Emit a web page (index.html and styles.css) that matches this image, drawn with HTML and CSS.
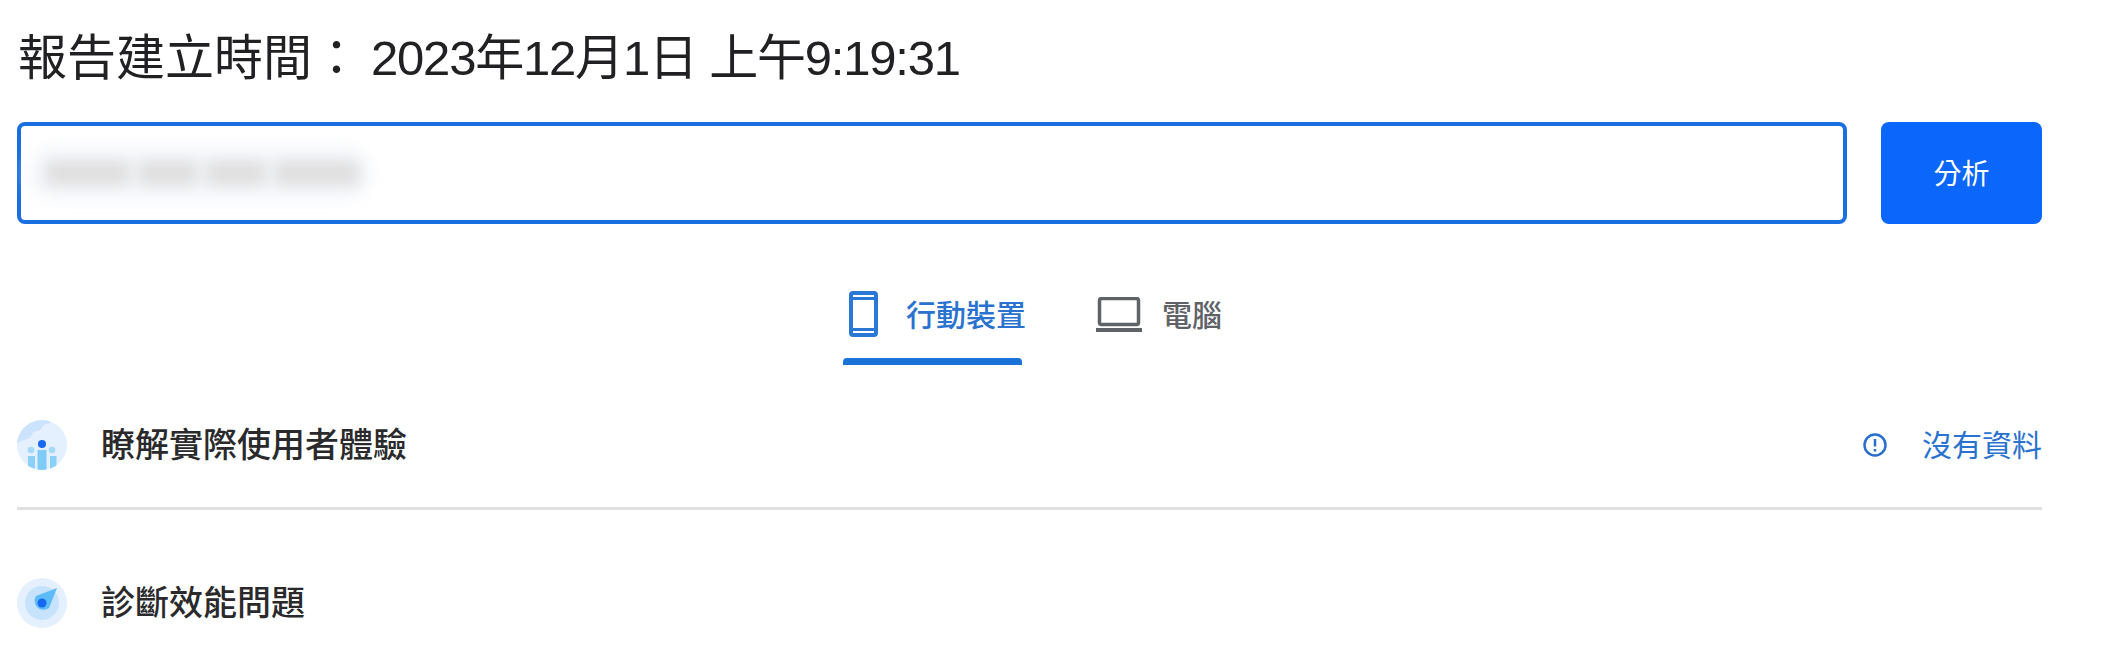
FILE: index.html
```html
<!DOCTYPE html>
<html lang="zh-Hant">
<head>
    <meta charset="UTF-8">
    <title>PageSpeed Insights</title>
    <link rel="stylesheet" href="styles.css">
</head>
<body>
    <h1 class="report-time">報告建立時間：<span class="report-date">2023年12月1日 上午9:19:31</span></h1>

    <form class="url-form">
        <div class="url-field">
            <div class="smudge">
                <span class="smudge-dark long"></span>
                <span class="smudge-dark"></span>
                <span class="smudge-dark"></span>
                <span class="smudge-dark long"></span>
            </div>
        </div>
        <button type="button" class="analyze-btn">分析</button>
    </form>

    <div class="tabs">
        <div class="tab active">
            <svg class="tab-icon phone" viewBox="0 0 29 46">
                <rect x="2" y="2" width="25" height="42" rx="2" fill="none" stroke="#2a78d6" stroke-width="4"/>
                <path d="M3 7.500h23M3 38.500h23" stroke="#2a78d6" stroke-width="3"/>
            </svg>
            <span class="tab-label">行動裝置</span>
        </div>
        <div class="tab">
            <svg class="tab-icon laptop" viewBox="0 0 46 36">
                <rect x="3.500" y="1.500" width="39" height="26" rx="2" fill="none" stroke="#5f6368" stroke-width="3.500"/>
                <path d="M0 33h46" stroke="#5f6368" stroke-width="4"/>
            </svg>
            <span class="tab-label">電腦</span>
        </div>
    </div>

    <section class="section with-line">
        <svg class="section-icon" viewBox="0 0 50 50">
            <defs>
                <clipPath id="disc"><circle cx="25" cy="25" r="25"/></clipPath>
            </defs>
            <g clip-path="url(#disc)">
                <rect width="50" height="50" fill="#e4f0fd"/>
                <path d="M0 0h33v3l-6 2-4 5-7 2-3 6-6 2-7 3z" fill="#cbe3fc"/>
                <path d="M11 36h7v14h-7zM33 36h6.500v14H33z" fill="#8ad0f9"/>
                <rect x="20.500" y="30" width="9" height="20" fill="#7fcbf8"/>
            </g>
            <circle cx="14" cy="30" r="3.300" fill="#a5d9fa"/>
            <circle cx="35" cy="30" r="3.300" fill="#a5d9fa"/>
            <circle cx="25" cy="24" r="4" fill="#1668f0"/>
        </svg>
        <h2 class="section-title">瞭解實際使用者體驗</h2>
        <div class="no-data">
            <svg class="info-icon" viewBox="0 0 26 26">
                <circle cx="13" cy="13" r="10.500" fill="none" stroke="#2a6fd0" stroke-width="2.500"/>
                <path d="M13 7v7.500M13 17v2.500" stroke="#2a6fd0" stroke-width="2.500"/>
            </svg>
            <span class="no-data-label">沒有資料</span>
        </div>
    </section>

    <section class="section">
        <svg class="section-icon" viewBox="0 0 50 50">
            <circle cx="25" cy="25" r="25" fill="#e4f0fd"/>
            <circle cx="25" cy="25" r="17" fill="#c6e3fb"/>
            <path d="M40 10 32 30a9 9 0 0 1-13-12z" fill="#5dbbf8"/>
            <circle cx="25" cy="25" r="4.500" fill="#1668f0"/>
        </svg>
        <h2 class="section-title">診斷效能問題</h2>
    </section>
</body>
</html>
```

FILE: styles.css
```css
body {
    margin: 0;
    padding: 0 78px 0 17px;
    background: #fff;
    color: #212124;
    font-family: "Liberation Sans", "Noto Sans CJK TC", sans-serif;
}

.report-time {
    margin: 0 0 0 1px;
    padding-top: 28px;
    height: 122px;
    box-sizing: border-box;
    font-size: 49px;
    line-height: 60px;
    font-weight: 400;
    white-space: nowrap;
}

.report-date {
    margin-left: 10px;
    letter-spacing: -1.200px;
}

.url-form {
    display: flex;
    gap: 34px;
    height: 102px;
}

.url-field {
    flex: 1;
    display: flex;
    align-items: center;
    border: 4px solid #1a6fe0;
    border-radius: 8px;
    padding-left: 6px;
}

.smudge {
    display: flex;
    align-items: center;
    gap: 8px;
    width: 327px;
    height: 56px;
    padding-left: 18px;
    background: #f6f8fc;
    border-radius: 28px;
    filter: blur(7px);
}

.smudge-dark {
    display: block;
    width: 60px;
    height: 26px;
    background: #e0e0e0;
}

.smudge-dark.long {
    width: 85px;
}

.analyze-btn {
    width: 161px;
    padding-bottom: 3px;
    border: none;
    border-radius: 8px;
    background: #0b66fb;
    color: #fff;
    font-family: inherit;
    font-size: 28px;
}

.tabs {
    display: flex;
    justify-content: center;
    gap: 68px;
    margin-top: 61px;
    padding-left: 12px;
}

.tab {
    display: flex;
    align-items: center;
    height: 80px;
    padding: 0 6px 22px;
    box-sizing: border-box;
    color: #5f6368;
    font-size: 30px;
    font-weight: 500;
    white-space: nowrap;
}

.tab-label {
    padding-bottom: 3px;
}

.tab.active {
    position: relative;
    width: 179px;
    color: #2a72cf;
}

.tab.active::after {
    content: "";
    position: absolute;
    left: 0;
    right: 0;
    bottom: 0;
    height: 7px;
    background: #1a73d8;
    border-radius: 4px 4px 0 0;
}

.tab-icon {
    flex: none;
}

.phone {
    width: 29px;
    height: 46px;
    margin-right: 28px;
}

.laptop {
    width: 46px;
    height: 36px;
    margin-top: 2px;
    margin-right: 20px;
}

.section {
    display: flex;
    align-items: center;
    height: 50px;
    margin-top: 68px;
}

.section.with-line {
    height: 100px;
    margin-top: 30px;
    padding-bottom: 12px;
    border-bottom: 3px solid #e0e0e0;
}

.section-icon {
    width: 50px;
    height: 50px;
    margin-right: 34px;
    flex: none;
}

.section-title {
    margin: 0;
    padding-bottom: 5px;
    font-size: 34px;
    font-weight: 500;
    color: #2a2a2c;
}

.no-data {
    margin-left: auto;
    display: flex;
    align-items: center;
    gap: 34px;
    color: #2a72cf;
    font-size: 30px;
}

.no-data-label {
    padding-bottom: 5px;
}

.info-icon {
    width: 26px;
    height: 26px;
}
```
